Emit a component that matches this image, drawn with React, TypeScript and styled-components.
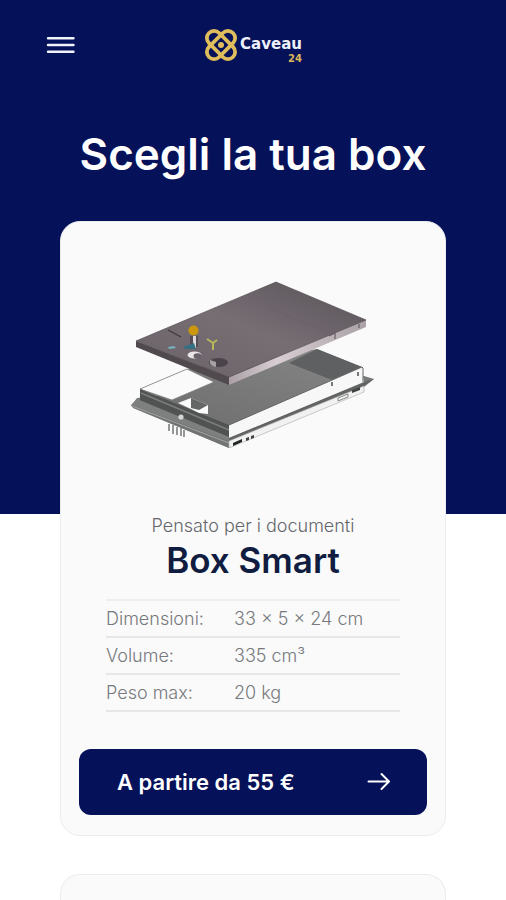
import React from "react";
import styled, { createGlobalStyle } from "styled-components";

const GlobalStyle = createGlobalStyle`
  *, *::before, *::after { box-sizing: border-box; }
  body { margin: 0; background: #fff; font-family: Inter, "Liberation Sans", sans-serif; }
`;

const navy = "#051159";

const Page = styled.div`
  min-height: 100vh;
  display: flex;
  flex-direction: column;
  background: linear-gradient(${navy} 514px, #fff 514px);
`;

const Header = styled.header`
  display: grid;
  grid-template-columns: 1fr auto 1fr;
  align-items: center;
  height: 90px;
  padding: 0 44px;
`;

const MenuButton = styled.button`
  justify-self: start;
  display: flex;
  padding: 0;
  border: 0;
  background: none;
  cursor: pointer;
`;

const Logo = styled.a`
  display: flex;
  align-items: center;
  gap: 2px;
  color: #eef0fb;
  text-decoration: none;
`;

const Wordmark = styled.span`
  display: flex;
  flex-direction: column;
  align-items: flex-end;
  padding-top: 9px;
  font: bold 15px/17px "DejaVu Sans", sans-serif;
`;

const WordmarkNumber = styled.span`
  color: #d9b75a;
  font-size: 10px;
  line-height: 11px;
`;

const Main = styled.main`
  flex: 1;
  display: flex;
  flex-direction: column;
`;

const Title = styled.h1`
  margin: 0;
  padding: 34px 0 37px;
  color: #fff;
  font-size: 44px;
  line-height: 60px;
  font-weight: 600;
  text-align: center;
`;

const CardList = styled.div`
  flex: 1;
  display: flex;
  flex-direction: column;
  gap: 38px;
  padding: 0 60px;
`;

const Card = styled.article`
  display: flex;
  flex-direction: column;
  padding: 56px 18px 20px;
  border: 1px solid #ececee;
  border-radius: 20px;
  background: #fafafa;
`;

const UpcomingCard = styled.article`
  flex: 1;
  border: 1px solid #ececee;
  border-bottom: 0;
  border-radius: 20px 20px 0 0;
  background: #fafafa;
`;

const Illustration = styled.svg`
  display: block;
  align-self: center;
  width: 252px;
  height: 174px;
`;

const Caption = styled.p`
  margin: 62px 0 0;
  color: #64666b;
  font-size: 18px;
  line-height: 24px;
  font-weight: 300;
  text-align: center;
`;

const BoxName = styled.h2`
  margin: 0 0 17px;
  color: #101c40;
  font-size: 35px;
  line-height: 44px;
  font-weight: 600;
  text-align: center;
`;

const Specs = styled.table`
  margin: 0 27px;
  border-collapse: collapse;
  border-top: 2px solid #efeff0;
  color: #77797d;
  font-size: 18px;
  line-height: 24px;
  text-align: left;
`;

const SpecRow = styled.tr`
  height: 37px;
  border-bottom: 2px solid #e7e7e9;
`;

const SpecName = styled.th`
  width: 128px;
  padding: 0;
  font-weight: 300;
`;

const SpecValue = styled.td`
  padding: 0;
  font-weight: 300;
`;

const PriceButton = styled.button`
  display: flex;
  align-items: center;
  justify-content: space-between;
  height: 66px;
  margin-top: 37px;
  padding: 0 36px 0 38px;
  border: 0;
  border-radius: 12px;
  background: ${navy};
  color: #fff;
  font: 600 22px/28px Inter, "Liberation Sans", sans-serif;
  cursor: pointer;
`;

function MenuIcon() {
  return (
    <svg width="34" height="24" viewBox="0 0 34 24" fill="none" stroke="#f1f2fa" strokeWidth="2.4" strokeLinecap="round" aria-hidden="true">
      <path d="M4 5.2h25.5M4 12h25.5M4 18.8h25.5" />
    </svg>
  );
}

function LogoMark() {
  return (
    <svg width="34" height="34" viewBox="-17 -17 34 34" fill="none" stroke="#e0bd5c" strokeWidth="3.8" aria-hidden="true">
      <rect x="-17" y="-7.2" width="34" height="14.4" rx="7.2" transform="rotate(45)" />
      <rect x="-17" y="-7.2" width="34" height="14.4" rx="7.2" transform="rotate(-45)" />
      <circle r="3" fill="#e0bd5c" stroke="none" />
    </svg>
  );
}

function ArrowIcon() {
  return (
    <svg width="24" height="20" viewBox="0 0 24 20" fill="none" stroke="#fff" strokeWidth="2" strokeLinecap="round" strokeLinejoin="round" aria-hidden="true">
      <path d="M1.5 9.5H22M14.5 2l7.5 7.5L14.5 17" />
    </svg>
  );
}

function SafeBoxDrawing() {
  return (
    <Illustration viewBox="128 278 252 174" role="img" aria-label="Box Smart">
      <defs>
        <linearGradient id="lid" x1="0" y1="1" x2="1" y2="0">
          <stop offset="0" stopColor="#696267" />
          <stop offset=".5" stopColor="#776e74" />
          <stop offset="1" stopColor="#575257" />
        </linearGradient>
        <linearGradient id="lidEdge">
          <stop offset="0" stopColor="#aaa0a5" />
          <stop offset=".35" stopColor="#d8cdd2" />
          <stop offset="1" stopColor="#aaa2a6" />
        </linearGradient>
        <linearGradient id="floor" x1="0" y1="1" x2="1" y2="0">
          <stop offset="0" stopColor="#6c6d6c" />
          <stop offset="1" stopColor="#858685" />
        </linearGradient>
      </defs>

      <path d="M132 406l6-8 227-22 10 3-10 8-135 61z" fill="#777978" />
      <path d="M141 389l47-20 130-20 45 18-133 58z" fill="url(#floor)" />
      <path d="M290 363l28-14 45 18-30 13z" fill="#5f6061" />
      <path d="M141 389l47-20 27 13-42 18z" fill="#fafafa" stroke="#777" strokeWidth=".7" />
      <path d="M141 389l89 36v14l-89-38z" fill="#515353" />
      <path d="M142 393l88 37" stroke="#7c7e7e" strokeWidth="1.4" />
      <path d="M179 403l13-5 17 7v9l-9-1-8-4z" fill="#fafafa" />
      <path d="M192 398l17 7-9 5-8-2z" fill="#656666" />
      <path d="M138 399l92 38v5l-98-37z" fill="#7e8080" />
      <path d="M132 405l98 36v7l-96-40z" fill="#727474" />
      <path d="M133 406l97 37" stroke="#a3a5a5" strokeWidth="1" />
      <circle cx="182" cy="417" r="2.6" fill="#d5d7d7" />
      <path d="M230 425l133-58 2 16-135 55z" fill="#f7f7f7" />
      <path d="M230 425l133-58 1 1v14" fill="none" stroke="#626464" strokeWidth="1" />
      <path d="M230 438l135-56 10-3-10 7-135 57z" fill="#626464" />
      <path d="M230 441l135-55v6l-135 56z" fill="#f1f1f1" stroke="#aaa" strokeWidth=".6" />
      <path d="M234 443l9-4v3l-9 4z" fill="#202324" />
      <path d="M247 438l3-1v3l-3 1zM252 436l3-1v3l-3 1zM353 390l8-3v3l-8 3z" fill="#3e4243" />
      <path d="M339 398l10-4v3l-10 4z" fill="none" stroke="#858888" />
      <path d="M333 382v4M359 372v4" stroke="#777" strokeWidth="2" />
      <path d="M170 424v7M174 425v9M178 427v8M182 428v8M185 430v7" stroke="#606464" strokeWidth="1.3" />

      <path d="M137 341l93 36v8l-93-38z" fill="#50494e" />
      <path d="M230 377l137-57v7l-137 58z" fill="url(#lidEdge)" />
      <path d="M137 341l140-59 90 38-137 57z" fill="url(#lid)" stroke="#554d52" strokeWidth=".7" />
      <path d="M271 309l62 25" stroke="#68606a" strokeWidth=".7" />
      <path d="M330 336l6-3v6M360 324v4" fill="none" stroke="#665e64" strokeWidth="1.2" />
      <path d="M169 330l13 7" stroke="#40393e" strokeWidth="1.4" />
      <path d="M191 336h8v11h-8z" fill="#554f55" />
      <path d="M194 336h3v12h-3z" fill="#ddd9dd" />
      <circle cx="194.5" cy="330.5" r="5" fill="#cb980d" />
      <path d="M184 347l11-4 2 6h-11z" fill="#357083" />
      <path d="M169 347l6-1 2 2-7 1z" fill="#78b3bd" />
      <path d="M208 339l6 4v7M214 343l4-3" fill="none" stroke="#b9b757" strokeWidth="2" />
      <ellipse cx="195.5" cy="355" rx="7" ry="3.5" fill="#ebe7e9" />
      <ellipse cx="198.5" cy="356" rx="4" ry="2.7" fill="#696069" />
      <ellipse cx="219.5" cy="362.5" rx="9.5" ry="4.5" fill="#4b454b" />
      <path d="M211 360l6 2v5q-5-1-6-4z" fill="#a7a0a5" />
    </Illustration>
  );
}

const specs = [
  { name: "Dimensioni:", value: "33 × 5 × 24 cm" },
  { name: "Volume:", value: "335 cm³" },
  { name: "Peso max:", value: "20 kg" },
];

export default function App() {
  return (
    <>
      <GlobalStyle />
      <Page>
        <Header>
          <MenuButton type="button" aria-label="Menu">
            <MenuIcon />
          </MenuButton>
          <Logo href="#">
            <LogoMark />
            <Wordmark>
              Caveau
              <WordmarkNumber>24</WordmarkNumber>
            </Wordmark>
          </Logo>
        </Header>
        <Main>
          <Title>Scegli la tua box</Title>
          <CardList>
            <Card>
              <SafeBoxDrawing />
              <Caption>Pensato per i documenti</Caption>
              <BoxName>Box Smart</BoxName>
              <Specs>
                <tbody>
                  {specs.map((spec) => (
                    <SpecRow key={spec.name}>
                      <SpecName scope="row">{spec.name}</SpecName>
                      <SpecValue>{spec.value}</SpecValue>
                    </SpecRow>
                  ))}
                </tbody>
              </Specs>
              <PriceButton type="button">
                A partire da 55 €
                <ArrowIcon />
              </PriceButton>
            </Card>
            <UpcomingCard />
          </CardList>
        </Main>
      </Page>
    </>
  );
}
